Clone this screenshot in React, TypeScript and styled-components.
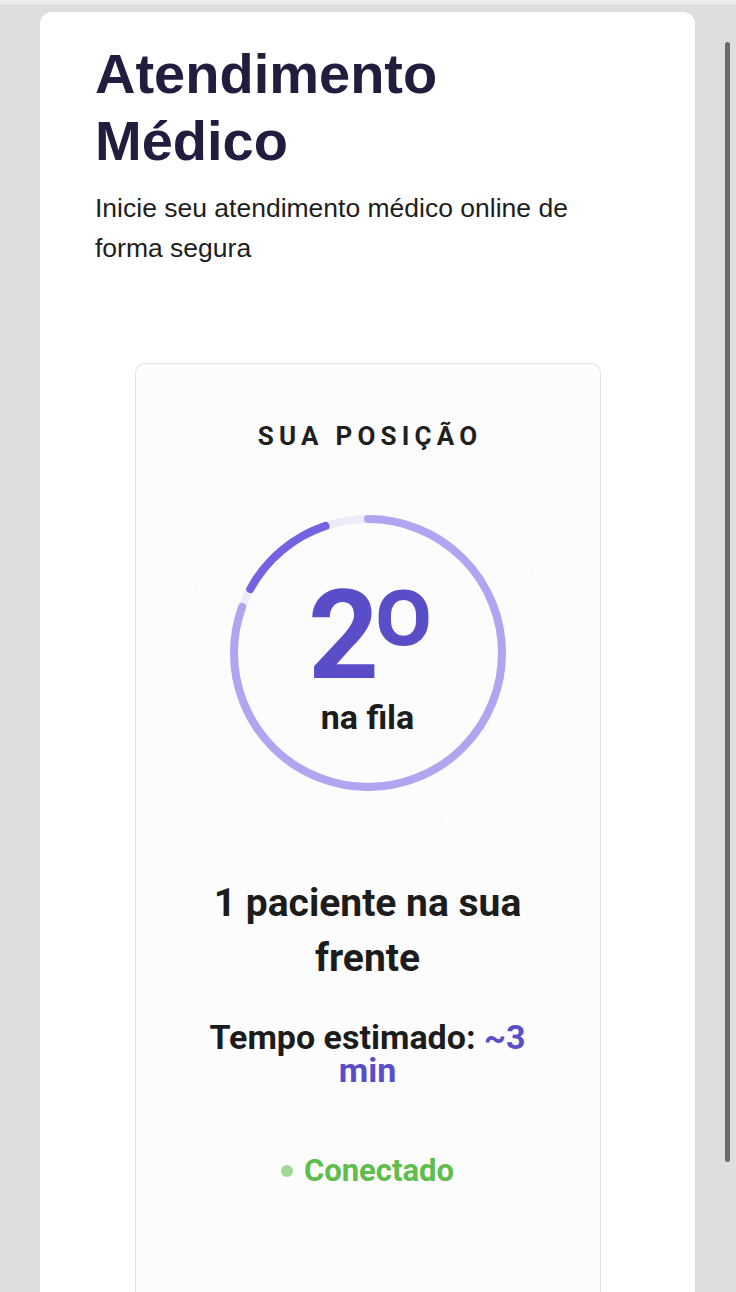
import React from 'react';
import styled, {createGlobalStyle} from 'styled-components';

const GlobalStyle = createGlobalStyle`
    html, body {
        margin: 0;
        padding: 0;
        height: 1292px;
        overflow: hidden;
        background: #dedede;
    }
`;

const TopStrip = styled.div`
    height: 4px;
    background: #ebebeb;
    border-bottom: 1px solid #e3e3e3;
`;

const Shell = styled.div`
    display: grid;
    grid-template-columns: 40px 655px 1fr;
    padding-top: 7px;
`;

const ScrollTrack = styled.div`
    display: flex;
    justify-content: flex-end;
    padding: 30px 6px 0 0;
`;

const ScrollThumb = styled.div`
    width: 5px;
    height: 1120px;
    border-radius: 3px;
    background: #6b6b6b;
`;

const Card = styled.main`
    grid-column: 2;
    background: #ffffff;
    border-radius: 12px 12px 0 0;
    padding: 28px 55px 0;
    min-height: 1300px;
    box-sizing: border-box;
`;

const Title = styled.h1`
    margin: 0;
    font-family: "Liberation Sans", Arial, sans-serif;
    font-size: 56px;
    line-height: 67px;
    font-weight: 700;
    color: #221d3f;
`;

const Subtitle = styled.p`
    margin: 14px 0 0;
    max-width: 500px;
    font-family: "Liberation Sans", Arial, sans-serif;
    font-size: 26.5px;
    line-height: 40px;
    color: #1e1e1e;
`;

const QueueCard = styled.section`
    width: 466px;
    margin: 95px auto 0;
    box-sizing: border-box;
    border: 1px solid #e3e3e3;
    border-bottom: none;
    border-radius: 10px 10px 0 0;
    background: #fcfcfc;
    padding: 57px 48px 160px;
    display: flex;
    flex-direction: column;
    align-items: center;
    font-family: Roboto, "Noto Sans", sans-serif;
    text-align: center;
`;

const Label = styled.h2`
    margin: 0;
    font-size: 26px;
    line-height: 31px;
    font-weight: 700;
    letter-spacing: 0.2em;
    margin-right: -0.2em;
    color: #202020;
`;

const Ring = styled.div`
    position: relative;
    width: 370px;
    height: 370px;
    box-sizing: border-box;
    padding-top: 11px;
    margin-top: 16px;
    display: flex;
    flex-direction: column;
    align-items: center;
    justify-content: center;
`;

const RingSvg = styled.svg`
    position: absolute;
    inset: 0;
`;

const Position = styled.div`
    position: relative;
    font-size: 124px;
    line-height: 110px;
    font-weight: 700;
    color: #5a4ec8;
`;

const Ordinal = styled.span`
    display: inline-block;
    margin-left: -9px;
    transform: scale(1.19);
    transform-origin: left top;
`;

const PositionNote = styled.div`
    position: relative;
    margin-top: 6px;
    font-size: 34px;
    line-height: 40px;
    font-weight: 700;
    color: #1c1c1c;
`;

const Ahead = styled.p`
    margin: 38px 0 0;
    font-size: 39px;
    line-height: 55px;
    font-weight: 700;
    color: #1c1c1c;
`;

const Estimate = styled.p`
    margin: 35px 0 0;
    font-size: 34px;
    line-height: 33px;
    font-weight: 700;
    color: #1c1c1c;
`;

const Highlight = styled.span`
    color: #5a4ec8;
`;

const Status = styled.div<{ $color: string }>`
    margin-top: 67px;
    display: flex;
    align-items: center;
    gap: 11px;
    font-size: 31px;
    line-height: 34px;
    font-weight: 700;
    color: ${p => p.$color};
`;

const StatusDot = styled.span<{ $color: string }>`
    width: 12px;
    height: 12px;
    border-radius: 50%;
    background: ${p => p.$color};
`;

const R = 134;
const C = 2 * Math.PI * R;
const arc = (deg: number) => `${(deg / 360) * C} ${C}`;

const QueueRing: React.FC = () => (
    <RingSvg viewBox="0 0 370 370" width={370} height={370}>
        <circle cx={185} cy={185} r={183} fill="none" stroke="#f7f7f9" strokeWidth={3}
                strokeDasharray="1 70" strokeLinecap="round"/>
        <circle cx={185} cy={185} r={R} fill="none" stroke="#eeebfb" strokeWidth={8}/>
        <circle cx={185} cy={185} r={R} fill="none" stroke="#b0a5f1" strokeWidth={8}
                strokeLinecap="round" strokeDasharray={arc(290)} transform="rotate(270 185 185)"/>
        <circle cx={185} cy={185} r={R} fill="none" stroke="#7363e1" strokeWidth={8}
                strokeLinecap="round" strokeDasharray={arc(43)} transform="rotate(208.5 185 185)"/>
    </RingSvg>
);

export default function App() {
    return (
        <>
            <GlobalStyle/>
            <TopStrip/>
            <Shell>
                <Card>
                    <Title>Atendimento Médico</Title>
                    <Subtitle>Inicie seu atendimento médico online de forma segura</Subtitle>
                    <QueueCard>
                        <Label>SUA POSIÇÃO</Label>
                        <Ring>
                            <QueueRing/>
                            <Position>2<Ordinal>º</Ordinal></Position>
                            <PositionNote>na fila</PositionNote>
                        </Ring>
                        <Ahead>1 paciente na sua frente</Ahead>
                        <Estimate>Tempo estimado: <Highlight>~3 min</Highlight></Estimate>
                        <Status $color="#5fbd4b">
                            <StatusDot $color="#a1d895"/>
                            Conectado
                        </Status>
                    </QueueCard>
                </Card>
                <ScrollTrack>
                    <ScrollThumb/>
                </ScrollTrack>
            </Shell>
        </>
    );
}
